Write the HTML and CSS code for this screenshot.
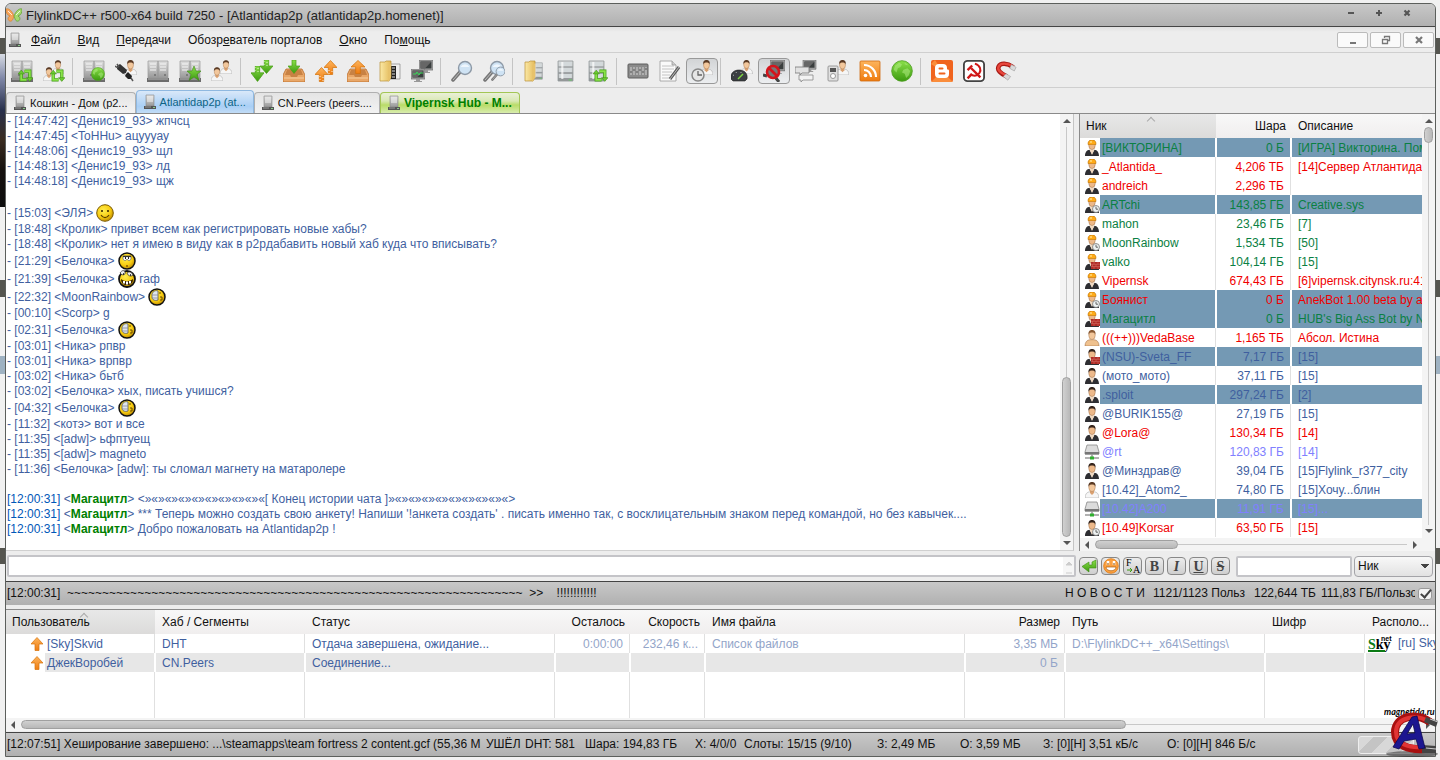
FILE: index.html
```html
<!DOCTYPE html>
<html lang="ru">
    <head>
        <meta charset="UTF-8">
        <title>FlylinkDC++</title>
        <link rel="stylesheet" href="styles.css">
    </head>

    <body>
        <!-- icons used more than once -->
        <svg class="sprites" aria-hidden="true">
            <defs>
                <linearGradient id="metal" x1="0" y1="0" x2="0" y2="1"><stop offset="0" stop-color="#e0e0e0"/><stop offset="1" stop-color="#989898"/></linearGradient>
                <linearGradient id="orange" x1="0" y1="0" x2="0" y2="1"><stop offset="0" stop-color="#fdb45c"/><stop offset="1" stop-color="#ef7c10"/></linearGradient>
                <linearGradient id="green" x1="0" y1="0" x2="0" y2="1"><stop offset="0" stop-color="#8be04a"/><stop offset="1" stop-color="#3c9a10"/></linearGradient>
                <radialGradient id="gold" cx=".4" cy=".35" r=".7"><stop offset="0" stop-color="#ffee50"/><stop offset=".6" stop-color="#f8cc10"/><stop offset="1" stop-color="#b88400"/></radialGradient>
                <linearGradient id="folder" x1="0" y1="0" x2="1" y2="0"><stop offset="0" stop-color="#fbe9a6"/><stop offset="1" stop-color="#e3b958"/></linearGradient>
            </defs>
            <symbol id="server" viewBox="0 0 12 16">
                <path d="M2 1h8v11H2z" fill="url(#metal)" stroke="#888" stroke-width=".6"/>
                <path d="M3 3h6M3 5h6M3 7h6" stroke="#f4f4f4"/>
                <path d="M0 12h12v3H0z" fill="#555"/><path d="M1 13h6" stroke="#999"/><path d="M9 13h2v1H9z" fill="#8c8"/>
            </symbol>
            <symbol id="rack" viewBox="0 0 22 22">
                <path d="M1 1h10v17H1zM11 1h10v17H11z" fill="url(#metal)" stroke="#999" stroke-width=".7"/>
                <path d="M3 4h6M3 7h6M3 10h6M13 4h6M13 7h6M13 10h6" stroke="#f6f6f6"/>
                <path d="M0 18h22v4H0z" fill="#6c6c6c"/><path d="M1 19h20" stroke="#b5b5b5"/>
                <path d="M8 14v2M18 14v2" stroke="#555"/>
            </symbol>
            <symbol id="man" viewBox="0 0 14 16">
                <path d="M0 16c0-4 2-6 5-6.300h4c3 .3 5 2.300 5 6.300z" fill="#f6f6f6" stroke="#a8a8a8" stroke-width=".6"/>
                <path d="M5 8h4v3l-2 2-2-2z" fill="#d9a070"/>
                <ellipse cx="7" cy="5.500" rx="3.200" ry="4" fill="#f2c79c" stroke="#a8764c" stroke-width=".5"/>
                <path d="M3.500 5C3 1 5 0 7 0s4 1 3.500 5C10 3 9 2.600 7 2.600S4 3 3.500 5z" fill="#5a3a24"/>
            </symbol>
            <symbol id="suit" viewBox="0 0 14 16">
                <path d="M0 16c0-4 2-6 4.500-6.300L7 14l2.500-4.300C12 10 14 12 14 16z" fill="#2e2e32"/>
                <path d="M4.500 9.500h5L7 15z" fill="#f0d8c0"/>
                <ellipse cx="7" cy="5.500" rx="3.200" ry="4" fill="#edb98a" stroke="#9a683f" stroke-width=".5"/>
                <path d="M3.500 5C3 1 5 0 7 0s4 1 3.500 5C10 3 9 2.600 7 2.600S4 3 3.500 5z" fill="#35251c"/>
            </symbol>
            <symbol id="helmet" viewBox="0 0 14 16">
                <use href="#suit"/>
                <path d="M3 4.500C3 1 4.500 0 7 0s4 1 4 4.500z" fill="#ffab18" stroke="#c87806" stroke-width=".6"/><path d="M6 1v2" stroke="#fff0b0"/>
            </symbol>
            <symbol id="clock" viewBox="0 0 8 8">
                <circle cx="4" cy="4" r="3.500" fill="#eef2f2" stroke="#777" stroke-width=".8"/><path d="M4 1.800V4.200H6" fill="none" stroke="#444" stroke-width=".8"/>
            </symbol>
            <symbol id="bricks" viewBox="0 0 9 8">
                <path d="M0 1h9v7H0z" fill="#b02a24"/><path d="M0 3.300h9M0 5.600h9M3 1v2.300M7 1v2.300M1.500 3.300v2.300M5 3.300v2.300M3 5.600V8M7 5.600V8" stroke="#e08a80" stroke-width=".4"/>
            </symbol>
            <symbol id="u-op" viewBox="0 0 16 16"><use href="#helmet" x="1" y="0" width="14" height="16"/></symbol>
            <symbol id="u-op-away" viewBox="0 0 16 16"><use href="#helmet" x="1" y="0" width="14" height="16"/><use href="#clock" x="8" y="8" width="8" height="8"/></symbol>
            <symbol id="u-op-wall" viewBox="0 0 16 16"><use href="#helmet" x="1" y="0" width="14" height="16"/><use href="#bricks" x="7" y="7" width="9" height="8"/></symbol>
            <symbol id="u-suit" viewBox="0 0 16 16"><use href="#suit" x="1" y="0" width="14" height="16"/></symbol>
            <symbol id="u-suit-away" viewBox="0 0 16 16"><use href="#suit" x="1" y="0" width="14" height="16"/><use href="#clock" x="8" y="8" width="8" height="8"/></symbol>
            <symbol id="u-suit-wall" viewBox="0 0 16 16"><use href="#suit" x="1" y="0" width="14" height="16"/><use href="#bricks" x="7" y="7" width="9" height="8"/></symbol>
            <symbol id="u-man" viewBox="0 0 16 16"><use href="#man" x="1" y="0" width="14" height="16"/></symbol>
            <symbol id="u-bare" viewBox="0 0 16 16">
                <path d="M1 16c0-4 2-6 5-6.300h4c3 .3 5 2.300 5 6.300z" fill="#efc18e" stroke="#a8764c" stroke-width=".6"/>
                <ellipse cx="8" cy="5.500" rx="3.200" ry="4" fill="#f2c79c" stroke="#a8764c" stroke-width=".5"/>
                <path d="M4.500 5C4 1 6 0 8 0s4 1 3.500 5C11 3 10 2.600 8 2.600S5 3 4.500 5z" fill="#8a5a34"/>
            </symbol>
            <symbol id="u-net" viewBox="0 0 16 16">
                <path d="M3 1h10l2 7v2H1V8z" fill="#dcdcdc" stroke="#888" stroke-width=".8"/><path d="M1 8h14v2.500H1z" fill="#777"/>
                <path d="M8 10v3M1 14h14" stroke="#999" stroke-width="1.500"/><path d="M6 12.500h4v3H6z" fill="#2fae2f"/>
            </symbol>
            <symbol id="cycle" viewBox="0 0 14 12">
                <path d="M3 3v7h5M11 9V2H6" fill="none" stroke="#3c9a10" stroke-width="3"/>
                <path d="M3 3v7h5M11 9V2H6" fill="none" stroke="#8ae24a" stroke-width="1.800"/>
                <path d="M0 4.500L3 1l3 3.500zM8 8l3 3.500L14 8z" fill="#6ccc32" stroke="#38880e" stroke-width=".5"/>
            </symbol>
            <symbol id="globe" viewBox="0 0 16 16">
                <circle cx="8" cy="8" r="7.500" fill="url(#green)" stroke="#4e9e22" stroke-width=".6"/>
                <path d="M3 4l3-2 2 1-1 2-2 1-1 3-2-2zM9 7l3-1 2 2-1 3-2 2-1-3-2-1zM10 2l2 1v1l-2-1z" fill="#b6f08a" opacity=".5"/>
            </symbol>
            <symbol id="down" viewBox="0 0 12 14" preserveAspectRatio="none">
                <path d="M4 0h4v6h4l-6 7.500L0 6h4z" fill="url(#green)" stroke="#4aa019" stroke-width=".7"/>
            </symbol>
            <symbol id="up" viewBox="0 0 12 14" preserveAspectRatio="none">
                <path d="M4 13.500h4V7h4L6 .5 0 7h4z" fill="url(#orange)" stroke="#d5730c" stroke-width=".7"/>
            </symbol>
            <symbol id="tray" viewBox="0 0 22 14">
                <path d="M3 1h16l3 6v7H0V7z" fill="#e9a768" stroke="#b56b2c" stroke-width=".8"/><path d="M4 2h14l2 5h-5l-1 2H8L7 7H2z" fill="#c88244"/><path d="M1 10h20" stroke="#f7cf9f"/>
            </symbol>
            <symbol id="mon" viewBox="0 0 14 13">
                <path d="M0 0h14v10H0z" fill="#a9a9a9" stroke="#666" stroke-width=".7"/><path d="M1.500 1.500h11v7h-11z" fill="#3a3e3e"/><path d="M1.500 1.500h11L6 8.500H1.500z" fill="#666"/><path d="M5 10h4v2H5zM3 12h8v1H3z" fill="#999"/>
            </symbol>
            <symbol id="db" viewBox="0 0 16 22" preserveAspectRatio="none">
                <path d="M1 1h14v20H1z" fill="url(#metal)" stroke="#8d9597" stroke-width=".8"/>
                <path d="M2 2h12v4H2zM2 8h12v4H2zM2 14h12v4H2z" fill="#d3d9db"/><path d="M1 7h14M1 13h14M1 19h14" stroke="#8a9296"/><path d="M5 2v17" stroke="#fff" stroke-width="2" opacity=".7"/><path d="M11 20h3" stroke="#6c6"/>
            </symbol>
            <symbol id="lens" viewBox="0 0 22 22">
                <path d="M9 12L2 20" stroke="#777" stroke-width="3.500" stroke-linecap="round"/><path d="M9 12L2 20" stroke="#bbb" stroke-width="1"/>
                <circle cx="14" cy="8" r="6.500" fill="#cfe3f4" stroke="#8d99a6" stroke-width="1.400"/><path d="M9.500 7a5 5 0 0 1 9 0z" fill="#eef6fd"/>
            </symbol>
            <symbol id="face-side" viewBox="0 0 18 18">
                <circle cx="9" cy="9" r="8" fill="url(#gold)" stroke="#111" stroke-width="1.500"/>
                <path d="M4 6c1-3 4-4 6-3v9c-3 1-6 0-6-3z" fill="#dfe6ee" stroke="#555" stroke-width=".8"/><path d="M4 7h6M4 10h6" stroke="#889" stroke-width=".8"/><path d="M12 4v2M12 9h2v3h-2" stroke="#6b4a00" fill="none"/>
            </symbol>
            <symbol id="arrow-l" viewBox="0 0 6 8"><path d="M5 0v8L1 4z" fill="#555"/></symbol>
            <symbol id="arrow-r" viewBox="0 0 6 8"><path d="M1 0v8l4-4z" fill="#555"/></symbol>
            <symbol id="arrow-u" viewBox="0 0 8 6"><path d="M0 5h8L4 1z" fill="#555"/></symbol>
            <symbol id="arrow-d" viewBox="0 0 8 6"><path d="M0 1h8L4 5z" fill="#555"/></symbol>
        </svg>

        <main class="window">
            <header class="titleBar">
                <svg class="appIcon" viewBox="0 0 16 16">
                    <path d="M8 9C6 4 3 1 0 2c0 4 1 6 4 7-3 1-2 5 0 5 2 1 3-2 4-5z" fill="#f6a55b" stroke="#d9822b" stroke-width=".7"/>
                    <path d="M8 9c2-5 5-8 8-7 0 4-1 6-4 7 3 1 2 5 0 5-2 1-3-2-4-5z" fill="#a5d86e" stroke="#5da02c" stroke-width=".7"/>
                    <path d="M2 4l4 4M14 4l-4 4" stroke="#fff" stroke-width=".8"/>
                </svg>
                <h1>FlylinkDC++ r500-x64 build 7250 - [Atlantidap2p (atlantidap2p.homenet)]</h1>
                <div class="titleButtons">
                    <button aria-label="Свернуть"><svg viewBox="0 0 8 8"><path d="M1 4h6" stroke="#555" stroke-width="2"/></svg></button>
                    <button aria-label="Развернуть"><svg viewBox="0 0 8 8"><path d="M1 4h6M4 1v6" stroke="#555" stroke-width="2"/></svg></button>
                    <button aria-label="Закрыть"><svg viewBox="0 0 8 8"><path d="M1.500 1.500l5 5M6.500 1.500l-5 5" stroke="#555" stroke-width="2.200"/></svg></button>
                </div>
            </header>

            <nav class="menuBar">
                <svg class="serverIcon"><use href="#server"/></svg>
                <button><u>Ф</u>айл</button>
                <button><u>В</u>ид</button>
                <button><u>П</u>ередачи</button>
                <button>Обозр<u>е</u>ватель порталов</button>
                <button><u>О</u>кно</button>
                <button>По<u>м</u>ощь</button>
                <div class="childButtons">
                    <button aria-label="Свернуть окно"><svg viewBox="0 0 10 10"><path d="M2 8h6" stroke="#777" stroke-width="2"/></svg></button>
                    <button aria-label="Восстановить окно"><svg viewBox="0 0 10 10"><path d="M3.500 3V1.500h5v4H7M1.500 4.500h5v4h-5z" fill="none" stroke="#777" stroke-width="1.300"/></svg></button>
                    <button aria-label="Закрыть окно"><svg viewBox="0 0 10 10"><path d="M2 2l6 6M8 2L2 8" stroke="#777" stroke-width="2.200"/></svg></button>
                </div>
            </nav>

            <div class="toolBar">
                <button aria-label="Переподключиться"><svg viewBox="0 0 22 22"><use href="#rack"/><use href="#cycle" x="7" y="9" width="15" height="13"/></svg></button>
                <button aria-label="Обновить пользователей"><svg viewBox="0 0 22 22"><use href="#man" x="9" y="0" width="12" height="14"/><use href="#man" x="0" y="7" width="12" height="14"/><use href="#cycle" x="7" y="9" width="15" height="13"/></svg></button>
                <span class="separator"></span>
                <button aria-label="Интернет-хабы"><svg viewBox="0 0 22 22"><use href="#rack"/><use href="#globe" x="8" y="7" width="14" height="14"/></svg></button>
                <button aria-label="Подключение"><svg viewBox="0 0 22 22"><use href="#man" x="9" y="0" width="13" height="15"/><path d="M2 6l3-2 7 6-1 3-3 1-6-5z" fill="#333"/><path d="M11 14l2-2 4 4-1 3-3 0-3-3z" fill="#222"/><path d="M0 6l3 2M2 4l2 3M16 18l2 3" stroke="#555" stroke-width="1.500"/></svg></button>
                <button aria-label="Хабы"><svg viewBox="0 0 22 22"><use href="#rack"/></svg></button>
                <button aria-label="Избранные хабы"><svg viewBox="0 0 22 22"><use href="#rack"/><path d="M15 6l2 5h5l-4 3.500 2 6-5-3.500-5 3.500 2-6L8 11h5z" fill="url(#green)" stroke="#3c8a14" stroke-width=".6"/></svg></button>
                <button aria-label="Избранные пользователи"><svg viewBox="0 0 22 22"><use href="#man" x="9" y="0" width="12" height="14"/><use href="#man" x="0" y="7" width="12" height="14"/></svg></button>
                <span class="separator"></span>
                <button aria-label="Очередь скачивания"><svg viewBox="0 0 22 22"><use href="#down" x="9" y="0" width="13" height="14"/><use href="#down" x="0" y="6" width="13" height="16"/><path d="M13 1v1m3 0v1m-3 1v1m3 0v1M4 7v1m3 0v1m-3 1v1m3 0v1" stroke="#e4f8d0" stroke-width="1"/></svg></button>
                <button aria-label="Скачанные"><svg viewBox="0 0 22 22"><use href="#tray" x="0" y="8" width="22" height="14"/><use href="#down" x="5" y="0" width="12" height="14"/></svg></button>
                <button aria-label="Очередь отдачи"><svg viewBox="0 0 22 22"><use href="#up" x="9" y="0" width="13" height="15"/><use href="#up" x="0" y="7" width="13" height="15"/><path d="M5 16v1m3 0v1m-3 1v1m3 0v1M14 10v1m3 0v1m-3 1v1" stroke="#fdeedd" stroke-width="1"/></svg></button>
                <button aria-label="Отданные"><svg viewBox="0 0 22 22"><use href="#tray" x="0" y="8" width="22" height="14"/><use href="#up" x="4" y="0" width="14" height="14"/></svg></button>
                <button aria-label="Файл-лист"><svg viewBox="0 0 22 22"><path d="M9 4h12v15H9z" fill="#eee" stroke="#888" stroke-width=".7"/><path d="M11 6h6v13h-6z" fill="#222"/><path d="M13 8h3M13 11h3M13 14h3M13 17h3" stroke="#ddd"/><path d="M1 2h5l1-1h5v16l-2 4H1z" fill="url(#folder)" stroke="#b98f38" stroke-width=".7"/><path d="M12 3v15l-3 4V6z" fill="#e7c26b"/></svg></button>
                <button aria-label="Статистика сети"><svg viewBox="0 0 22 22"><use href="#mon" x="8" y="0" width="14" height="13"/><use href="#mon" x="0" y="9" width="14" height="13"/><path d="M2 14h3l1-2 2 3 1-2h3" fill="none" stroke="#38d858"/></svg></button>
                <span class="separator"></span>
                <button aria-label="Поиск"><svg viewBox="0 0 22 22"><use href="#lens"/></svg></button>
                <button aria-label="ADL-поиск"><svg viewBox="0 0 22 22"><use href="#lens"/><use href="#lens" x="8" y="6" width="15" height="15"/></svg></button>
                <span class="separator"></span>
                <button aria-label="Открыть файл-лист"><svg viewBox="0 0 22 22"><use href="#db" x="9" y="2" width="11" height="18"/><path d="M2 2h4l1-1h5v16l-2 4H2z" fill="url(#folder)" stroke="#b98f38" stroke-width=".7"/><path d="M12 3v15l-3 4V6z" fill="#e7c26b"/></svg></button>
                <button aria-label="Свой файл-лист"><svg viewBox="0 0 22 22"><use href="#db" x="2" y="0" width="17" height="22"/></svg></button>
                <button aria-label="Обновить шару"><svg viewBox="0 0 22 22"><use href="#db" x="1" y="0" width="17" height="22"/><use href="#cycle" x="6" y="9" width="15" height="13"/></svg></button>
                <span class="separator"></span>
                <button aria-label="Настройки"><svg viewBox="0 0 22 22"><rect x="1" y="4" width="20" height="14" rx="1" fill="#8b8b8b" stroke="#5e5e5e"/><path d="M4 7v8M7 7v8M10 7v8M13 7v8M16 7v8M19 7v8" stroke="#e4e4e4" stroke-width=".8"/><path d="M3 12h2M6 10h2M9 12h2M12 10h2M15 12h2M18 9h2" stroke="#555"/></svg></button>
                <button aria-label="Блокнот"><svg viewBox="0 0 22 22"><path d="M1 1h12l4 4v16H1z" fill="#fafafa" stroke="#999" stroke-width=".8"/><path d="M3 6h12M3 9h12M3 12h10M3 15h8M3 18h8" stroke="#b5b5b5" stroke-width=".8"/><path d="M13 1v4h4" fill="#ccc" stroke="#999" stroke-width=".8"/><path d="M20 7l-9 12" stroke="#5a5a5a" stroke-width="3"/><path d="M20 7l-9 12" stroke="#bbb"/></svg></button>
                <button class="pressed" aria-label="Отошёл"><svg viewBox="0 0 22 22"><use href="#man" x="9" y="0" width="13" height="15"/><circle cx="7" cy="15" r="6" fill="#e6e6e6" stroke="#888" stroke-width="1.500"/><path d="M7 11v4h4" fill="none" stroke="#666" stroke-width="1.300"/></svg></button>
                <span class="separator"></span>
                <button aria-label="Ограничение скорости"><svg viewBox="0 0 22 22"><use href="#man" x="9" y="0" width="13" height="14"/><path d="M0 19c-1-6 3-9 8-9s9 3 8 9l-2 2H2z" fill="#3b3f42" stroke="#222" stroke-width=".6"/><path d="M7 19l5-5" stroke="#7ed63e" stroke-width="1.500"/><path d="M2 15l1 .5M5 12l.5 1M10 12v1" stroke="#ccc" stroke-width=".8"/></svg></button>
                <button class="pressed" aria-label="Всплывающие окна"><svg viewBox="0 0 22 22"><use href="#mon" x="7" y="0" width="15" height="14"/><path d="M0 15l4 1M12 17l4 5" stroke="#444" stroke-width="3"/><circle cx="10" cy="12" r="6" fill="#777" stroke="#d4141c" stroke-width="2.600"/><path d="M6 8l8 8" stroke="#d4141c" stroke-width="2.600"/></svg></button>
                <button aria-label="Сообщения"><svg viewBox="0 0 22 22"><use href="#mon" x="7" y="0" width="15" height="12"/><path d="M0 7h14v6H7l-2 2v-2H0z" fill="#e2e2e2" stroke="#777" stroke-width=".8"/><path d="M4 15h14v5H8l-2 2v-2H4z" fill="#f2f2f2" stroke="#888" stroke-width=".8"/></svg></button>
                <button aria-label="Плеер"><svg viewBox="0 0 22 22"><use href="#man" x="9" y="0" width="13" height="15"/><rect x="1" y="6" width="10" height="15" rx="1" fill="#e0e0e0" stroke="#888" stroke-width=".8"/><path d="M3 8h6v4H3z" fill="#555"/><circle cx="6" cy="16" r="2.500" fill="#fff" stroke="#999"/></svg></button>
                <button aria-label="RSS"><svg viewBox="0 0 22 22"><rect x="1" y="1" width="20" height="20" rx="1" fill="url(#orange)" stroke="#cf6a10" stroke-width=".8"/><path d="M5 10a7 7 0 0 1 7 7M5 5a12 12 0 0 1 12 12" fill="none" stroke="#fff" stroke-width="2.200"/><circle cx="6.500" cy="15.500" r="1.800" fill="#fff"/></svg></button>
                <button aria-label="Проверить обновления"><svg viewBox="0 0 22 22"><use href="#globe"/></svg></button>
                <span class="separator"></span>
                <button aria-label="Блог"><svg viewBox="0 0 22 22"><rect width="22" height="22" rx="2" fill="#f0641e"/><path d="M0 22L11 11 22 22zM0 4l11 7L4 0z" fill="#fa8d3c"/><path d="M8 4h4a4 4 0 0 1 4 4c0 1 0 1.500 1 1.500 1 0 1 1 1 2V14a4 4 0 0 1-4 4H8a4 4 0 0 1-4-4V8a4 4 0 0 1 4-4z" fill="#fff"/><path d="M8.500 8.500h3M8.500 13.500h5" stroke="#f0641e" stroke-width="2" stroke-linecap="round"/></svg></button>
                <button aria-label="СССР"><svg viewBox="0 0 24 24"><rect x="1" y="1" width="22" height="22" rx="4" fill="#fff" stroke="#444" stroke-width="2"/><path d="M13 4c6 2 7 7 5 10-3 4-7 4-10 1" fill="none" stroke="#d01818" stroke-width="2.200"/><path d="M9 16l-4 4M9 9l10 10M5 11l5-5" stroke="#d01818" stroke-width="2.600"/></svg></button>
                <button aria-label="Магнит"><svg viewBox="0 0 24 22"><path d="M20 7C13 2 6 2 4 6s2 8 9 11" fill="none" stroke="#a81a14" stroke-width="5"/><path d="M20 6C13 2 6 2 4 6s2 7 9 10" fill="none" stroke="#e8463c" stroke-width="2.600"/><path d="M18 4l5 3-2 4-5-3zM12 14l5 3-3 4-5-4z" fill="#d9d9d9" stroke="#999" stroke-width=".6"/></svg></button>
            </div>

            <div class="tabs">
                <button class="tab"><svg class="serverIcon"><use href="#server"/></svg>Кошкин - Дом (p2...</button>
                <button class="tab active"><svg class="serverIcon"><use href="#server"/></svg>Atlantidap2p (at...</button>
                <button class="tab"><svg class="serverIcon"><use href="#server"/></svg>CN.Peers (peers....</button>
                <button class="tab unread"><svg class="serverIcon"><use href="#server"/></svg>Vipernsk Hub - M...</button>
            </div>

            <section class="hub">
                <div class="chat">
                    <div class="messages">
                        <p>- [14:47:42] &lt;Денис19_93&gt; жпчсц</p>
                        <p>- [14:47:45] &lt;ToHHu&gt; ацуууау</p>
                        <p>- [14:48:06] &lt;Денис19_93&gt; щл</p>
                        <p>- [14:48:13] &lt;Денис19_93&gt; лд</p>
                        <p>- [14:48:18] &lt;Денис19_93&gt; щж</p>
                        <p>&nbsp;</p>
                        <p class="withSmile">- [15:03] &lt;ЭЛЯ&gt; <svg viewBox="0 0 18 18"><circle cx="9" cy="9" r="8.300" fill="url(#gold)" stroke="#7a5a00" stroke-width="1"/><path d="M6 6v2M12 6v2" stroke="#3a2a00" stroke-width="1.600"/><path d="M5 11c2 3.500 6 3.500 8 0" fill="none" stroke="#5a4000" stroke-width="1.200"/></svg></p>
                        <p>- [18:48] &lt;Кролик&gt; привет всем как регистрировать новые хабы?</p>
                        <p>- [18:48] &lt;Кролик&gt; нет я имею в виду как в p2pдабавить новый хаб куда что вписывать?</p>
                        <p class="withSmile">- [21:29] &lt;Белочка&gt; <svg viewBox="0 0 18 18"><circle cx="9" cy="9" r="8" fill="url(#gold)" stroke="#111" stroke-width="1.500"/><path d="M5 4h8v3c-1 2-3 2-4 0-1 2-3 2-4 0z" fill="#fff" stroke="#444" stroke-width=".6"/><path d="M5 4.500h8" stroke="#333" stroke-width="1.200"/><path d="M7 6h1M10 6h1" stroke="#222" stroke-width="1.800"/><path d="M8 14h2" stroke="#8a5a00" stroke-width="1.500"/></svg></p>
                        <p class="withSmile">- [21:39] &lt;Белочка&gt; <svg viewBox="0 0 18 18"><circle cx="9" cy="9" r="8" fill="url(#gold)" stroke="#111" stroke-width="1.800"/><path d="M2 3c2-3 4-3 5-1 1 3-3 4-5 1zM9 3c2-2 5-1 6 2-2 2-5 1-6-2z" fill="#eee" stroke="#222" stroke-width=".7"/><path d="M5 4h1M12 5h1" stroke="#111" stroke-width="1.500"/><path d="M3 9c4 3 8 3 12 0 0 4-2 6-6 6s-6-2-6-6z" fill="#3a2400"/><path d="M6 11v2.500M9 11.500v3M12 11v2.500" stroke="#fff" stroke-width="2"/></svg> гаф</p>
                        <p class="withSmile">- [22:32] &lt;MoonRainbow&gt; <svg><use href="#face-side"/></svg></p>
                        <p>- [00:10] &lt;Scorp&gt; g</p>
                        <p class="withSmile">- [02:31] &lt;Белочка&gt; <svg><use href="#face-side"/></svg></p>
                        <p>- [03:01] &lt;Ника&gt; рпвр</p>
                        <p>- [03:01] &lt;Ника&gt; врпвр</p>
                        <p>- [03:02] &lt;Ника&gt; бьтб</p>
                        <p>- [03:02] &lt;Белочка&gt; хых, писать учишся?</p>
                        <p class="withSmile">- [04:32] &lt;Белочка&gt; <svg><use href="#face-side"/></svg></p>
                        <p>- [11:32] &lt;котэ&gt; вот и все</p>
                        <p>- [11:35] &lt;[adw]&gt; ьфптуещ</p>
                        <p>- [11:35] &lt;[adw]&gt; magneto</p>
                        <p>- [11:36] &lt;Белочка&gt; [adw]: ты сломал магнету на матаролере</p>
                        <p>&nbsp;</p>
                        <p><time>[12:00:31]</time> &lt;<b>Магацитл</b>&gt; &lt;»«»«»«»«»«»«»«»«»«[ Конец истории чата ]»«»«»«»«»«»«»«»«»«&gt;</p>
                        <p><time>[12:00:31]</time> &lt;<b>Магацитл</b>&gt; *** Теперь можно создать свою анкету! Напиши '!анкета создать' . писать именно так, с восклицательным знаком перед командой, но без кавычек....</p>
                        <p><time>[12:00:31]</time> &lt;<b>Магацитл</b>&gt; Добро пожаловать на Atlantidap2p !</p>
                    </div>
                    <div class="scrollV">
                        <svg><use href="#arrow-u"/></svg>
                        <div class="track"><div class="thumb chatThumb"></div></div>
                        <svg><use href="#arrow-d"/></svg>
                    </div>
                </div>

                <div class="users">
                    <div class="usersView">
                        <div class="usersClip">
                            <table class="userTable">
                                <colgroup><col class="cIcon"><col class="cNick"><col class="cShare"><col></colgroup>
                                <thead>
                                    <tr><th colspan="2" class="sorted">Ник</th><th class="num">Шара</th><th>Описание</th></tr>
                                </thead>
                                <tbody>
                                    <tr class="selected green"><td><svg><use href="#u-op"/></svg></td><td>[ВИКТОРИНА]</td><td>0 Б</td><td>[ИГРА] Викторина. Помощь</td></tr>
                                    <tr class="red"><td><svg><use href="#u-op"/></svg></td><td>_Atlantida_</td><td>4,206 ТБ</td><td>[14]Сервер Атлантида</td></tr>
                                    <tr class="red"><td><svg><use href="#u-op"/></svg></td><td>andreich</td><td>2,296 ТБ</td><td></td></tr>
                                    <tr class="selected green"><td><svg><use href="#u-op-away"/></svg></td><td>ARTchi</td><td>143,85 ГБ</td><td>Creative.sys</td></tr>
                                    <tr class="green"><td><svg><use href="#u-op"/></svg></td><td>mahon</td><td>23,46 ГБ</td><td>[7]</td></tr>
                                    <tr class="green"><td><svg><use href="#u-op-away"/></svg></td><td>MoonRainbow</td><td>1,534 ТБ</td><td>[50]</td></tr>
                                    <tr class="green"><td><svg><use href="#u-op-wall"/></svg></td><td>valko</td><td>104,14 ГБ</td><td>[15]</td></tr>
                                    <tr class="red"><td><svg><use href="#u-op"/></svg></td><td>Vipernsk</td><td>674,43 ГБ</td><td>[6]vipernsk.citynsk.ru:411</td></tr>
                                    <tr class="selected red"><td><svg><use href="#u-op-away"/></svg></td><td>Боянист</td><td>0 Б</td><td>AnekBot 1.00 beta by adw</td></tr>
                                    <tr class="selected green"><td><svg><use href="#u-op-wall"/></svg></td><td>Магацитл</td><td>0 Б</td><td>HUB's Big Ass Bot by Nick</td></tr>
                                    <tr class="red"><td><svg><use href="#u-bare"/></svg></td><td>(((++)))VedaBase</td><td>1,165 ТБ</td><td>Абсол. Истина</td></tr>
                                    <tr class="selected"><td><svg><use href="#u-suit-wall"/></svg></td><td>(NSU)-Sveta_FF</td><td>7,17 ГБ</td><td>[15]</td></tr>
                                    <tr><td><svg><use href="#u-suit"/></svg></td><td>(мото_мото)</td><td>37,11 ГБ</td><td>[15]</td></tr>
                                    <tr class="selected"><td><svg><use href="#u-suit"/></svg></td><td>.sploit</td><td>297,24 ГБ</td><td>[2]</td></tr>
                                    <tr><td><svg><use href="#u-suit"/></svg></td><td>@BURIK155@</td><td>27,19 ГБ</td><td>[15]</td></tr>
                                    <tr class="red"><td><svg><use href="#u-suit"/></svg></td><td>@Lora@</td><td>130,34 ГБ</td><td>[14]</td></tr>
                                    <tr class="violet"><td><svg><use href="#u-net"/></svg></td><td>@rt</td><td>120,83 ГБ</td><td>[14]</td></tr>
                                    <tr><td><svg><use href="#u-suit"/></svg></td><td>@Минздрав@</td><td>39,04 ГБ</td><td>[15]Flylink_r377_city</td></tr>
                                    <tr><td><svg><use href="#u-man"/></svg></td><td>[10.42]_Atom2_</td><td>74,80 ГБ</td><td>[15]Хочу...блин</td></tr>
                                    <tr class="selected violet"><td><svg><use href="#u-net"/></svg></td><td>[10.42]A200</td><td>11,91 ГБ</td><td>[15]...</td></tr>
                                    <tr class="red"><td><svg><use href="#u-suit-away"/></svg></td><td>[10.49]Korsar</td><td>63,50 ГБ</td><td>[15]</td></tr>
                                </tbody>
                            </table>
                        </div>
                        <div class="scrollV">
                            <svg><use href="#arrow-u"/></svg>
                            <div class="track"><div class="thumb usersThumb"></div></div>
                            <svg><use href="#arrow-d"/></svg>
                        </div>
                    </div>
                    <div class="scrollH usersScroll">
                        <svg><use href="#arrow-l"/></svg>
                        <div class="track"><div class="thumb"></div></div>
                        <svg><use href="#arrow-r"/></svg>
                    </div>
                </div>
            </section>

            <form class="inputBar">
                <div class="messageBox">
                    <textarea aria-label="Сообщение" rows="1"></textarea>
                    <svg viewBox="0 0 11 18"><path d="M3 8l3-3 3 3zM3 16h6" fill="#ccc" stroke="#ccc"/></svg>
                </div>
                <div class="formatBar">
                    <button type="button" aria-label="Отправить"><svg viewBox="0 0 16 16"><path d="M15 2v8H8v4L1 8.500 8 4v3h3V4z" fill="url(#green)" stroke="#3c8a14" stroke-width=".6"/></svg></button>
                    <button type="button" aria-label="Смайлы"><svg viewBox="0 0 16 16"><circle cx="8" cy="8" r="7.300" fill="#fba040" stroke="#e07a10" stroke-width=".8"/><path d="M5 3v4M11 3v4" stroke="#fff" stroke-width="2.500"/><path d="M5 5v2M11 5v2" stroke="#8a4a00"/><path d="M3 9h10c0 5-10 5-10 0z" fill="#fff" stroke="#a85a0a" stroke-width=".7"/></svg></button>
                    <button type="button" aria-label="Транслит"><svg viewBox="0 0 16 16"><text x="1" y="8">F</text><text x="8" y="15">A</text><path d="M2 12h5M5 10l2 2-2 2" fill="none" stroke="#3c9a10"/></svg></button>
                    <button type="button"><b>B</b></button>
                    <button type="button"><i>I</i></button>
                    <button type="button"><u>U</u></button>
                    <button type="button"><s>S</s></button>
                </div>
                <input type="text" aria-label="Фильтр" class="filterInput">
                <select aria-label="Поле фильтра"><option>Ник</option></select>
            </form>

            <div class="hubStatus">
                <span class="statusText">[12:00:31]  ~~~~~~~~~~~~~~~~~~~~~~~~~~~~~~~~~~~~~~~~~~~~~~~~~~~~~~~~~~~~~~~~~  &gt;&gt;    !!!!!!!!!!!!</span>
                <span class="news">Н О В О С Т И</span>
                <span class="count">1121/1123 Польз</span>
                <span class="total">122,644 ТБ</span>
                <span class="average">111,83 ГБ/Пользователь</span>
                <input type="checkbox" checked aria-label="Показать список пользователей">
            </div>

            <section class="transfers">
                <table class="transferTable">
                    <colgroup><col class="tIcon"><col class="tUser"><col class="tHub"><col class="tStatus"><col class="tSmall"><col class="tSmall"><col class="tFile"><col class="tSize"><col class="tPath"><col class="tSize"><col></colgroup>
                    <thead>
                        <tr><th colspan="2" class="sorted">Пользователь</th><th>Хаб / Сегменты</th><th>Статус</th><th class="num">Осталось</th><th class="num">Скорость</th><th>Имя файла</th><th class="num">Размер</th><th>Путь</th><th>Шифр</th><th>Располо...</th></tr>
                    </thead>
                    <tbody>
                        <tr><td><svg viewBox="0 0 12 14"><use href="#up"/></svg></td><td>[Sky]Skvid</td><td>DHT</td><td>Отдача завершена, ожидание...</td><td class="num pale">0:00:00</td><td class="num pale">232,46 к...</td><td class="pale">Список файлов</td><td class="num pale">3,35 МБ</td><td class="pale">D:\FlylinkDC++_x64\Settings\</td><td></td>
                            <td class="place"><svg viewBox="0 0 26 16"><text class="skyNet" x="13" y="5">net</text><text class="skyText" x="0" y="13"><tspan fill="#0b7a14">S</tspan>ky</text><path d="M0 14h17v2H0z" fill="#0b7a14"/></svg>[ru] SkyNet</td></tr>
                        <tr class="odd"><td><svg viewBox="0 0 12 14"><use href="#up"/></svg></td><td>ДжекВоробей</td><td>CN.Peers</td><td>Соединение...</td><td></td><td></td><td></td><td class="num pale">0 Б</td><td></td><td></td><td></td></tr>
                        <tr class="filler"><td></td><td></td><td></td><td></td><td></td><td></td><td></td><td></td><td></td><td></td><td></td></tr>
                    </tbody>
                </table>
                <div class="scrollH transferScroll">
                    <svg><use href="#arrow-l"/></svg>
                    <div class="track"><div class="thumb"></div></div>
                    <svg><use href="#arrow-r"/></svg>
                </div>
            </section>

            <footer class="statusBar">
                <span>[12:07:51] Хеширование завершено: ...\steamapps\team fortress 2 content.gcf (55,36 МБ)</span>
                <span>УШЁЛ</span>
                <span>DHT: 581</span>
                <span>Шара: 194,83 ГБ</span>
                <span>X: 4/0/0</span>
                <span>Слоты: 15/15 (9/10)</span>
                <span>З: 2,49 МБ</span>
                <span>О: 3,59 МБ</span>
                <span>З: [0][H] 3,51 кБ/с</span>
                <span>О: [0][H] 846 Б/с</span>
                <div class="hashProgress"></div>
            </footer>
        </main>

        <svg class="watermark" viewBox="0 0 56 52">
            <text x="0" y="9">magnetida.ru</text>
            <ellipse cx="28" cy="48" rx="26" ry="3" fill="#333" opacity=".55"/>
            <path d="M46 16C32 6 11 10 11 26c0 14 14 18 30 17" fill="none" stroke="#a81010" stroke-width="8"/>
            <path d="M44 15C32 8 12 11 12 26c0 12 12 16 27 15" fill="none" stroke="#e03434" stroke-width="4"/>
            <path d="M42 11l12 4-2 6-12-5zM38 39l14 1v7H38z" fill="#444"/><path d="M46 13l8 3M42 42l10 1" stroke="#ccc"/>
            <path d="M9 41L28 11l5-1 8 32-6 1-3-10-12 2-5 8zM23 28l8-1-2-9z" fill="#1c1690" stroke="#0b0850" stroke-width=".8" fill-rule="evenodd"/>
        </svg>
    </body>
</html>
```
FILE: styles.css
```css
* {
    box-sizing: border-box;
}

/* other windows show at the edges of the desktop */
body {
    margin: 0;
    padding: 3px 4px 3px 5px;
    min-height: 100vh;
    display: flex;
    font-family: "Liberation Sans", Arial, sans-serif;
    font-size: 12px;
    line-height: 15px;
    color: #111;
    background:
        linear-gradient(transparent 38px, #55554f 38px, #55554f 54px, #d8dce4 54px, #8088a8 78px, #28304c 110px, #3a2c20 140px, #15100e 170px, #0c0c0c 207px, transparent 207px, transparent 280px, #55554f 280px, #55554f 297px, transparent 297px, transparent 356px, #9fb2c2 356px, #9fb2c2 374px, transparent 374px, transparent 548px, #55554f 548px, #55554f 564px, transparent 564px) left top / 5px 100% no-repeat,
        linear-gradient(transparent 38px, #55554f 38px, #55554f 54px, transparent 54px, transparent 280px, #55554f 280px, #55554f 297px, transparent 297px, transparent 356px, #9fb2c2 356px, #9fb2c2 374px, transparent 374px, transparent 548px, #55554f 548px, #55554f 564px, transparent 564px) right top / 4px 100% no-repeat,
        #f1f1f1;
}

button, input, select, textarea {
    font: inherit;
    color: inherit;
    margin: 0;
}

button {
    padding: 0;
    border: 0;
    background: none;
}

svg {
    display: block;
    flex: none;
}

.sprites {
    position: absolute;
    width: 0;
    height: 0;
}

.window {
    flex: 1;
    min-width: 0;
    display: flex;
    flex-direction: column;
    background: #ededed;
    border: 1px solid #5c5f5c;
    border-radius: 6px 6px 0 0;
    overflow: hidden;
}

/* title */
.titleBar {
    display: flex;
    align-items: center;
    height: 23px;
    background: linear-gradient(#c8c8c8, #b0b0b0);
    border-bottom: 1px solid #444;
}

.appIcon {
    width: 16px;
    height: 16px;
}

.titleBar h1 {
    margin: 0 auto 0 4px;
    font-size: 13px;
    font-weight: normal;
    color: #222;
}

.titleButtons {
    display: flex;
    gap: 20px;
    margin: 0 24px 4px 0;
}

.titleButtons svg {
    width: 8px;
    height: 8px;
}

/* menu */
.menuBar {
    display: flex;
    align-items: center;
    gap: 17px;
    height: 26px;
    padding: 1px 1px 0 3px;
    background: linear-gradient(#e0e0e0, #ededed 5px);
    border-bottom: 1px solid #cfcfcf;
}

.serverIcon {
    width: 12px;
    height: 16px;
}

.menuBar .serverIcon {
    margin-right: -7px;
}

.childButtons {
    display: flex;
    gap: 2px;
    margin-left: auto;
}

.childButtons button {
    display: flex;
    justify-content: center;
    align-items: center;
    width: 31px;
    height: 16px;
    background: #fafafa;
    border: 1px solid #bbb;
    border-radius: 2px;
}

.childButtons svg {
    width: 10px;
    height: 10px;
}

/* toolbar */
.toolBar {
    display: flex;
    align-items: center;
    height: 35px;
    padding: 2px 1px 0 0;
    border-bottom: 1px solid #cfcfcf;
}

.toolBar button {
    display: flex;
    justify-content: center;
    align-items: center;
    width: 32px;
    height: 26px;
}

.toolBar button svg {
    width: 22px;
    height: 22px;
}

.toolBar .pressed {
    background: linear-gradient(#d2d4d6, #eceef0);
    border: 1px solid #999;
    border-radius: 4px;
}

.separator {
    width: 6px;
    height: 27px;
    border-left: 1px solid #c4c4c4;
    margin-left: 2px;
}

/* tabs */
.tabs {
    display: flex;
    align-items: flex-end;
    height: 26px;
    border-bottom: 1px solid #8a8a8a;
}

.tab {
    display: flex;
    align-items: center;
    gap: 4px;
    height: 21px;
    padding: 0 7px;
    font-size: 11px;
    white-space: nowrap;
    background: linear-gradient(#e4e4e4, #f3f3f3);
    border: 1px solid #b0b0b0;
    border-bottom: 0;
    border-radius: 4px 4px 0 0;
}

.tab.active {
    height: 23px;
    color: #0c6485;
    background: linear-gradient(#d9e8f9, #a9cff5 70%, #c2dcf6);
    border-color: #8fb8e0;
}

.tab.unread {
    font-size: 12px;
    font-weight: bold;
    color: #008000;
    background: linear-gradient(#eaf0d8, #d9e8b4 40%, #b9dc68 60%, #d9edae);
    border-color: #a3c655;
}

/* chat and user list */
.hub {
    flex: 1;
    display: grid;
    grid-template-columns: minmax(0, 1fr) 356px;
    column-gap: 5px;
}

.chat {
    display: flex;
    background: #fff;
    border-right: 1px solid #c4c4c4;
    border-bottom: 1px solid #d0d0d0;
}

.messages {
    flex: 1;
    min-width: 0;
    padding-left: 1px;
    color: #3f5f9f;
}

.messages p {
    margin: 0;
}

.messages .withSmile {
    display: flex;
    align-items: center;
    height: 18px;
    white-space: pre;
}

.messages .withSmile svg {
    width: 18px;
    height: 18px;
}

.messages time {
    color: #0057b8;
}

.messages b {
    color: #008000;
}

.scrollV {
    display: flex;
    flex-direction: column;
    align-items: center;
    width: 13px;
    padding: 4px 0;
    background: #f4f4f4;
}

.scrollV > svg {
    width: 8px;
    height: 6px;
}

.track {
    flex: 1;
    display: flex;
}

.scrollV .track {
    flex-direction: column;
    width: 9px;
    margin: 3px 0;
    background: linear-gradient(90deg, transparent 4px, #c8c8c8 4px, #c8c8c8 5px, transparent 5px);
}

.thumb {
    background: linear-gradient(90deg, #d0d0d0, #b8b8b8);
    border: 1px solid #a0a0a0;
    border-radius: 5px;
}

.chatThumb {
    height: 39%;
    margin-top: auto;
}

.usersThumb {
    height: 16px;
}

.scrollH {
    display: flex;
    align-items: center;
    height: 13px;
    padding: 0 4px;
    background: #f4f4f4;
}

.scrollH > svg {
    width: 6px;
    height: 8px;
}

.scrollH .track {
    height: 9px;
    margin: 0 5px;
    background: linear-gradient(transparent 4px, #c8c8c8 4px, #c8c8c8 5px, transparent 5px);
}

.scrollH .thumb {
    background: linear-gradient(#d0d0d0, #b8b8b8);
}

.usersScroll {
    padding-right: 17px;
}

.usersScroll .thumb {
    width: 83px;
}

.transferScroll .thumb {
    width: 79%;
}

.users {
    display: flex;
    flex-direction: column;
    border-left: 1px solid #8a8a8a;
    background: #fff;
}

.usersView {
    flex: 1;
    display: flex;
}

.usersClip {
    flex: 1;
    min-width: 0;
    overflow: hidden;
}

table {
    width: 100%;
    table-layout: fixed;
    border-spacing: 0;
}

th {
    position: relative;
    height: 24px;
    padding: 0 7px;
    font-weight: normal;
    text-align: left;
    white-space: nowrap;
    background: linear-gradient(#f8f8f8, #f0eeee);
}

th.sorted {
    padding-left: 6px;
    background: linear-gradient(#e8e8e8, #dcdbda);
}

th.sorted::after {
    content: "";
    position: absolute;
    top: 4px;
    left: 50%;
    width: 5px;
    height: 5px;
    border: solid #aaa;
    border-width: 1px 0 0 1px;
    transform: rotate(45deg);
}

td {
    height: 19px;
    padding: 1px 6px 0;
    white-space: nowrap;
    overflow: hidden;
    color: #3f5f9f;
    border-left: 1px solid transparent;
    border-right: 1px solid #e0e0e0;
    background-clip: padding-box;
}

td:first-child {
    border: 0;
    padding: 0;
}

td:nth-child(2) {
    border-left: 0;
    padding: 1px 2px 0;
}

td:last-child {
    border-right: 0;
}

th.num, td.num {
    text-align: right;
}

th.num {
    padding-right: 5px;
}

.cIcon { width: 20px; }
.cNick { width: 116px; }
.cShare { width: 75px; }

.userTable td:first-child svg {
    width: 16px;
    height: 16px;
    margin-left: 4px;
}

.userTable td:nth-child(3) {
    text-align: right;
}

.userTable .green td { color: #0a8043; }
.userTable .red td { color: #f00000; }
.userTable .violet td { color: #8080ff; }

.userTable .selected td:not(:first-child) {
    background-color: #7499b4;
    border-color: #fff;
}

/* message input */
.inputBar {
    display: flex;
    align-items: center;
    height: 30px;
    padding: 0 2px 0 1px;
}

.messageBox {
    flex: 1;
    display: flex;
    height: 22px;
    background: #fff;
    border: 2px solid #c4c4c8;
    border-radius: 2px;
}

.messageBox textarea {
    flex: 1;
    border: 0;
    padding: 1px 2px;
    resize: none;
    overflow: hidden;
    background: transparent;
}

.messageBox svg {
    width: 11px;
    height: 18px;
    background: #f6f6f6;
}

.formatBar {
    display: flex;
    gap: 3px;
    margin: 0 6px 0 3px;
}

.formatBar button {
    display: flex;
    align-items: center;
    justify-content: center;
    width: 19px;
    height: 18px;
    font-family: "Liberation Serif", serif;
    font-size: 14px;
    font-weight: bold;
    color: #444;
    background: linear-gradient(#ececec, #cfcfcf);
    border: 1px solid #888;
    border-radius: 4px;
}

.formatBar svg {
    width: 16px;
    height: 16px;
}

.formatBar text {
    font-size: 10px;
    font-weight: normal;
}

.filterInput {
    width: 116px;
    height: 21px;
    border: 2px solid #c4c4c8;
    border-radius: 2px;
    background: #fff;
}

select {
    appearance: none;
    width: 79px;
    height: 21px;
    margin-left: 2px;
    padding: 0 3px;
    border: 1px solid #a4a4a8;
    border-radius: 4px;
    background: conic-gradient(from -45deg at 50% 100%, #444 90deg, transparent 0) right 3px center / 8px 4px no-repeat, linear-gradient(#f8f8f8, #e2e2e2);
}

/* hub status line */
.hubStatus {
    display: flex;
    align-items: center;
    height: 24px;
    padding: 0 3px 0 1px;
    white-space: pre;
    background: linear-gradient(#c8c8c8, #b0b0b0);
    border-top: 1px solid #444;
}

.statusText {
    flex: 1;
    min-width: 0;
    overflow: hidden;
}

.news { width: 88px; }
.count { width: 101px; }
.total { width: 67px; }

.average {
    width: 94px;
    overflow: hidden;
}

.hubStatus input {
    appearance: none;
    position: relative;
    width: 14px;
    height: 12px;
    margin-left: 3px;
    background: #f4f4f4;
    border: 1px solid #999;
    border-radius: 3px;
}

.hubStatus input:checked::after {
    content: "";
    position: absolute;
    left: 4px;
    top: -2px;
    width: 4px;
    height: 9px;
    border: solid #444;
    border-width: 0 2px 2px 0;
    transform: rotate(40deg);
}

/* transfers */
.transfers {
    margin: 4px 0 1px;
    border-top: 1px solid #8a8a8a;
    background: #fff;
}

.tIcon { width: 39px; }
.tUser { width: 110px; }
.tHub { width: 150px; }
.tStatus { width: 250px; }
.tSmall { width: 75px; }
.tFile { width: 260px; }
.tSize { width: 100px; }
.tPath { width: 200px; }

.transferTable td:first-child svg {
    width: 12px;
    height: 14px;
    margin-left: 25px;
}

.transferTable .pale {
    color: #93a5c9;
}

.transferTable .odd td:not(:first-child) {
    background-color: #e7e7e7;
    border-right-color: #fff;
}

.transferTable .filler td {
    height: 46px;
}

.transferTable .place {
    padding: 0 0 0 2px;
}

.place svg {
    display: inline-block;
    width: 26px;
    height: 16px;
    margin-right: 4px;
    vertical-align: middle;
}

.skyText {
    font: bold 14px "Liberation Serif", serif;
}

.skyNet {
    font: bold 7px "Liberation Sans", sans-serif;
}

/* bottom status line */
.statusBar {
    display: grid;
    grid-template-columns: minmax(0, 1fr) 39px 60px 110px 49px 133px 83px 83px 124px 191px 77px;
    align-items: center;
    height: 24px;
    padding-left: 1px;
    background: linear-gradient(#c8c8c8, #b0b0b0);
    border-top: 1px solid #444;
}

.statusBar span {
    overflow: hidden;
    white-space: nowrap;
}

.statusBar span:first-child {
    margin-right: 5px;
}

.hashProgress {
    width: 56px;
    height: 18px;
    border: 1px solid #eee;
    border-radius: 3px;
    background: repeating-linear-gradient(135deg, #d8d8d8 0 10px, #c4c4c4 10px 20px);
}

.watermark {
    position: absolute;
    right: 0;
    bottom: 2px;
    width: 56px;
    height: 52px;
}

.watermark text {
    font: italic bold 9px Lato, sans-serif;
}
```
